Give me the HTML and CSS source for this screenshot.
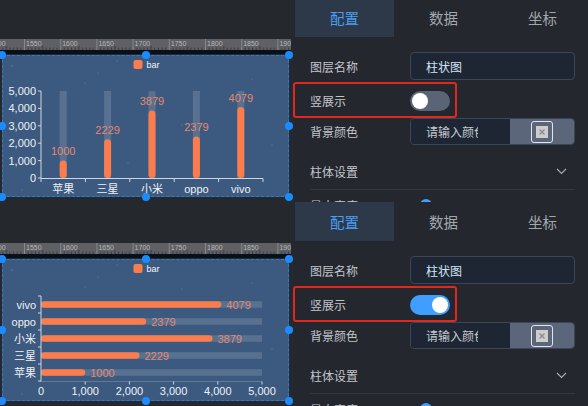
FILE: index.html
```html
<!DOCTYPE html>
<html lang="zh">
<head>
<meta charset="utf-8">
<title>柱状图配置</title>
<link rel="stylesheet" href="styles.css">
</head>
<body>

<div class="screen first">
  <div class="editor">
    <svg class="ruler" width="291" height="11" viewBox="0 0 291 11">
      <defs>
        <pattern id="tk1" x="24" y="0" width="36.2" height="11" patternUnits="userSpaceOnUse">
          <line x1="0.5" y1="0" x2="0.5" y2="11" class="major"/>
          <path d="M4.12 8.5V11M7.74 8.5V11M11.36 8.5V11M14.98 8.5V11M18.6 7V11M22.22 8.5V11M25.84 8.5V11M29.46 8.5V11M33.08 8.5V11" class="minor"/>
        </pattern>
      </defs>
      <rect width="291" height="11" class="rbg"/>
      <rect width="291" height="11" fill="url(#tk1)"/>
      <text x="-10" y="6.5">1500</text><text x="26" y="6.5">1550</text><text x="62.2" y="6.5">1600</text><text x="98.4" y="6.5">1650</text><text x="134.6" y="6.5">1700</text><text x="170.8" y="6.5">1750</text><text x="207" y="6.5">1800</text><text x="243.2" y="6.5">1850</text><text x="279.4" y="6.5">1900</text>
    </svg>
    <div class="ruler-bar"></div>
    <div class="chart">
      <svg class="plot" width="287" height="142" viewBox="0 0 287 142">
        <g class="stars">
          <circle cx="10" cy="11" r="0.7"/><circle cx="115" cy="6" r="0.6"/><circle cx="96" cy="18" r="0.5"/><circle cx="250" cy="24" r="0.6"/><circle cx="83" cy="28" r="0.5"/><circle cx="180" cy="70" r="0.6"/><circle cx="126" cy="108" r="0.6"/><circle cx="20" cy="135" r="0.5"/><circle cx="270" cy="90" r="0.6"/><circle cx="200" cy="130" r="0.5"/>
        </g>
        <rect class="lg" x="131.5" y="5" width="9" height="9" rx="2"/>
        <text class="lgt" x="144.5" y="12.5">bar</text>

        <g class="bgbar">
          <rect x="57.7" y="36" width="7" height="87"/>
          <rect x="102.1" y="36" width="7" height="87"/>
          <rect x="146.5" y="36" width="7" height="87"/>
          <rect x="190.9" y="36" width="7" height="87"/>
          <rect x="235.3" y="36" width="7" height="87"/>
        </g>
        <g class="bar">
          <rect x="57.7" y="105.6" width="7" height="17.4" rx="3.5"/>
          <rect x="102.1" y="84.2" width="7" height="38.8" rx="3.5"/>
          <rect x="146.5" y="55.5" width="7" height="67.5" rx="3.5"/>
          <rect x="190.9" y="81.6" width="7" height="41.4" rx="3.5"/>
          <rect x="235.3" y="52" width="7" height="71" rx="3.5"/>
        </g>
        <g class="axis">
          <line x1="39" y1="36" x2="39" y2="123.5"/>
          <line x1="36" y1="36" x2="39" y2="36"/>
          <line x1="36" y1="53.4" x2="39" y2="53.4"/>
          <line x1="36" y1="70.8" x2="39" y2="70.8"/>
          <line x1="36" y1="88.2" x2="39" y2="88.2"/>
          <line x1="36" y1="105.6" x2="39" y2="105.6"/>
          <line x1="36" y1="123" x2="39" y2="123"/>
          <line x1="39" y1="123.5" x2="261" y2="123.5"/>
          <line x1="39" y1="123.5" x2="39" y2="127"/>
          <line x1="83.4" y1="123.5" x2="83.4" y2="127"/>
          <line x1="127.8" y1="123.5" x2="127.8" y2="127"/>
          <line x1="172.2" y1="123.5" x2="172.2" y2="127"/>
          <line x1="216.6" y1="123.5" x2="216.6" y2="127"/>
          <line x1="261" y1="123.5" x2="261" y2="127"/>
        </g>
        <g class="lab end">
          <text x="34" y="40">5,000</text>
          <text x="34" y="57.4">4,000</text>
          <text x="34" y="74.8">3,000</text>
          <text x="34" y="92.2">2,000</text>
          <text x="34" y="109.6">1,000</text>
          <text x="34" y="127">0</text>
        </g>
        <g class="lab mid">
          <text x="61.2" y="137.5">苹果</text>
          <text x="105.6" y="137.5">三星</text>
          <text x="150" y="137.5">小米</text>
          <text x="194.4" y="137.5">oppo</text>
          <text x="238.8" y="137.5">vivo</text>
        </g>
        <g class="val mid">
          <text x="61.2" y="100.1">1000</text>
          <text x="105.6" y="78.7">2229</text>
          <text x="150" y="50">3879</text>
          <text x="194.4" y="76.1">2379</text>
          <text x="238.8" y="46.5">4079</text>
        </g>
      </svg>
      <span class="handle tl"></span><span class="handle tc"></span><span class="handle tr"></span>
      <span class="handle ml"></span><span class="handle mr"></span>
      <span class="handle bl"></span><span class="handle bc"></span><span class="handle br"></span>
    </div>
  </div>

  <div class="panel">
    <div class="tabs">
      <div class="tab active">配置</div>
      <div class="tab">数据</div>
      <div class="tab">坐标</div>
    </div>
    <div class="form">
      <div class="row r-name">
        <span class="label">图层名称</span>
        <div class="input">柱状图</div>
      </div>
      <div class="row r-toggle">
        <span class="label">竖展示</span>
        <span class="switch"><span class="knob"></span></span>
      </div>
      <div class="row r-color">
        <span class="label">背景颜色</span>
        <div class="color-input">
          <div class="color-text"><span class="ph">请输入颜色</span></div>
          <div class="color-btn">
            <span class="swatch">
              <svg width="12" height="12" viewBox="0 0 12 12"><rect width="12" height="12" fill="#cdcdcd"/><path d="M3.5 3.5L8.5 8.5M8.5 3.5L3.5 8.5" stroke="#8a8a8a" stroke-width="1.2"/></svg>
            </span>
          </div>
        </div>
      </div>
      <div class="row r-group">
        <span class="label">柱体设置</span>
        <svg class="chev" width="11" height="7" viewBox="0 0 11 7"><path d="M1 1L5.5 5.5L10 1" fill="none" stroke="#a6aab1" stroke-width="1.2"/></svg>
      </div>
      <div class="row r-width">
        <span class="label">最大宽度</span>
        <span class="slider"><span class="slider-knob"></span></span>
      </div>
    </div>
    <div class="highlight"></div>
  </div>
</div>

<div class="screen">
  <div class="editor">
    <svg class="ruler" width="291" height="11" viewBox="0 0 291 11">
      <defs>
        <pattern id="tk2" x="24" y="0" width="36.2" height="11" patternUnits="userSpaceOnUse">
          <line x1="0.5" y1="0" x2="0.5" y2="11" class="major"/>
          <path d="M4.12 8.5V11M7.74 8.5V11M11.36 8.5V11M14.98 8.5V11M18.6 7V11M22.22 8.5V11M25.84 8.5V11M29.46 8.5V11M33.08 8.5V11" class="minor"/>
        </pattern>
      </defs>
      <rect width="291" height="11" class="rbg"/>
      <rect width="291" height="11" fill="url(#tk2)"/>
      <text x="-10" y="6.5">1500</text><text x="26" y="6.5">1550</text><text x="62.2" y="6.5">1600</text><text x="98.4" y="6.5">1650</text><text x="134.6" y="6.5">1700</text><text x="170.8" y="6.5">1750</text><text x="207" y="6.5">1800</text><text x="243.2" y="6.5">1850</text><text x="279.4" y="6.5">1900</text>
    </svg>
    <div class="ruler-bar"></div>
    <div class="chart">
      <svg class="plot" width="287" height="142" viewBox="0 0 287 142">
        <g class="stars">
          <circle cx="10" cy="11" r="0.7"/><circle cx="115" cy="6" r="0.6"/><circle cx="96" cy="18" r="0.5"/><circle cx="250" cy="24" r="0.6"/><circle cx="83" cy="28" r="0.5"/><circle cx="180" cy="30" r="0.6"/><circle cx="126" cy="98" r="0.6"/><circle cx="20" cy="135" r="0.5"/><circle cx="270" cy="90" r="0.6"/><circle cx="200" cy="130" r="0.5"/>
        </g>
        <rect class="lg" x="131.5" y="5" width="9" height="9" rx="2"/>
        <text class="lgt" x="144.5" y="12.5">bar</text>

        <g class="bgbar">
          <rect x="39" y="42.25" width="221" height="6.5"/>
          <rect x="39" y="59.25" width="221" height="6.5"/>
          <rect x="39" y="76.25" width="221" height="6.5"/>
          <rect x="39" y="93.25" width="221" height="6.5"/>
          <rect x="39" y="110.25" width="221" height="6.5"/>
        </g>
        <g class="bar">
          <rect x="39" y="42.25" width="180.3" height="6.5" rx="3.25"/>
          <rect x="39" y="59.25" width="105.2" height="6.5" rx="3.25"/>
          <rect x="39" y="76.25" width="171.5" height="6.5" rx="3.25"/>
          <rect x="39" y="93.25" width="98.5" height="6.5" rx="3.25"/>
          <rect x="39" y="110.25" width="44.2" height="6.5" rx="3.25"/>
        </g>
        <g class="axis">
          <line x1="39" y1="37" x2="39" y2="122.5"/>
          <line x1="36" y1="37" x2="39" y2="37"/>
          <line x1="36" y1="54" x2="39" y2="54"/>
          <line x1="36" y1="71" x2="39" y2="71"/>
          <line x1="36" y1="88" x2="39" y2="88"/>
          <line x1="36" y1="105" x2="39" y2="105"/>
          <line x1="36" y1="122" x2="39" y2="122"/>
        </g>
        <g class="axis faint">
          <line x1="39" y1="122.5" x2="260" y2="122.5"/>
        </g>
        <g class="axis">
          <line x1="83.2" y1="122.5" x2="83.2" y2="125.5"/>
          <line x1="127.4" y1="122.5" x2="127.4" y2="125.5"/>
          <line x1="171.6" y1="122.5" x2="171.6" y2="125.5"/>
          <line x1="215.8" y1="122.5" x2="215.8" y2="125.5"/>
          <line x1="260" y1="122.5" x2="260" y2="125.5"/>
        </g>
        <g class="lab end">
          <text x="34" y="49.5">vivo</text>
          <text x="34" y="66.5">oppo</text>
          <text x="34" y="83.5">小米</text>
          <text x="34" y="100.5">三星</text>
          <text x="34" y="117.5">苹果</text>
        </g>
        <g class="lab mid">
          <text x="39" y="136">0</text>
          <text x="83.2" y="136">1,000</text>
          <text x="127.4" y="136">2,000</text>
          <text x="171.6" y="136">3,000</text>
          <text x="215.8" y="136">4,000</text>
          <text x="260" y="136">5,000</text>
        </g>
        <g class="val">
          <text x="224.3" y="49.5">4079</text>
          <text x="149.2" y="66.5">2379</text>
          <text x="215.5" y="83.5">3879</text>
          <text x="142.5" y="100.5">2229</text>
          <text x="88.2" y="117.5">1000</text>
        </g>
      </svg>
      <span class="handle tl"></span><span class="handle tc"></span><span class="handle tr"></span>
      <span class="handle ml"></span><span class="handle mr"></span>
      <span class="handle bl"></span><span class="handle bc"></span><span class="handle br"></span>
    </div>
  </div>

  <div class="panel">
    <div class="tabs">
      <div class="tab active">配置</div>
      <div class="tab">数据</div>
      <div class="tab">坐标</div>
    </div>
    <div class="form">
      <div class="row r-name">
        <span class="label">图层名称</span>
        <div class="input">柱状图</div>
      </div>
      <div class="row r-toggle">
        <span class="label">竖展示</span>
        <span class="switch on"><span class="knob"></span></span>
      </div>
      <div class="row r-color">
        <span class="label">背景颜色</span>
        <div class="color-input">
          <div class="color-text"><span class="ph">请输入颜色</span></div>
          <div class="color-btn">
            <span class="swatch">
              <svg width="12" height="12" viewBox="0 0 12 12"><rect width="12" height="12" fill="#cdcdcd"/><path d="M3.5 3.5L8.5 8.5M8.5 3.5L3.5 8.5" stroke="#8a8a8a" stroke-width="1.2"/></svg>
            </span>
          </div>
        </div>
      </div>
      <div class="row r-group">
        <span class="label">柱体设置</span>
        <svg class="chev" width="11" height="7" viewBox="0 0 11 7"><path d="M1 1L5.5 5.5L10 1" fill="none" stroke="#a6aab1" stroke-width="1.2"/></svg>
      </div>
      <div class="row r-width">
        <span class="label">最大宽度</span>
        <span class="slider"><span class="slider-knob"></span></span>
      </div>
    </div>
    <div class="highlight"></div>
  </div>
</div>

</body>
</html>
```

FILE: styles.css
```css
html, body {
  margin: 0;
  padding: 0;
}
body {
  width: 588px;
  height: 406px;
  overflow: hidden;
  background: #24272d;
  font-family: "Noto Sans CJK SC", "Liberation Sans", sans-serif;
}

.screen {
  display: flex;
  height: 204px;
  overflow: hidden;
}
.screen.first {
  margin-top: -2px;
}

/* editor / canvas side */
.editor {
  width: 294px;
  flex: none;
  padding-top: 41px;
  box-sizing: border-box;
  background: #25282d;
}
.ruler {
  display: block;
}
.ruler .rbg { fill: #5e6064; }
.ruler .major { stroke: #85878b; stroke-width: 1; }
.ruler .minor { stroke: #2c2d30; stroke-width: 0.8; }
.ruler text {
  font-family: "Liberation Sans", sans-serif;
  font-size: 7px;
  fill: #b4b6b9;
}
.ruler-bar {
  width: 291px;
  height: 4px;
  background: #0b0f17;
}

.chart {
  position: relative;
  margin: 1px 0 0 2px;
  width: 287px;
  height: 142px;
  background: #3c5a80;
  outline: 1px dashed rgba(40, 140, 255, 0.65);
  outline-offset: -1px;
}
.plot {
  display: block;
}
.plot text {
  font-family: "Liberation Sans", "Noto Sans CJK SC", sans-serif;
  font-size: 11px;
}
.plot .stars circle { fill: rgba(200, 215, 240, 0.35); }
.plot .lg { fill: #fb7c4c; }
.plot .lgt { fill: #f2f4f8; font-size: 9px; }
.plot .bgbar rect { fill: rgba(175, 182, 195, 0.25); }
.plot .bar rect { fill: #fb7c4c; }
.plot .axis line { stroke: #cfd6e0; stroke-width: 1; }
.plot .axis.faint line { stroke: rgba(207, 214, 224, 0.25); }
.plot .lab text { fill: #eef1f5; }
.plot .val text { fill: #e5886d; }
.plot .end text { text-anchor: end; }
.plot .mid text { text-anchor: middle; }

.handle {
  position: absolute;
  width: 8px;
  height: 8px;
  border-radius: 50%;
  background: #1a8cff;
  transform: translate(-50%, -50%);
}
.handle.tl { left: 0; top: 0; }
.handle.tc { left: 50%; top: 0; }
.handle.tr { left: 100%; top: 0; }
.handle.ml { left: 0; top: 50%; }
.handle.mr { left: 100%; top: 50%; }
.handle.bl { left: 0; top: 100%; }
.handle.bc { left: 50%; top: 100%; }
.handle.br { left: 100%; top: 100%; }

/* settings panel */
.panel {
  position: relative;
  width: 294px;
  flex: none;
  background: #24272d;
}
.tabs {
  display: flex;
  height: 39px;
  padding-left: 1px;
}
.tab {
  width: 99px;
  flex: none;
  display: flex;
  align-items: center;
  justify-content: center;
  font-size: 14.5px;
  color: #a3a7ae;
}
.tab.active {
  background: #2d3848;
  color: #4a9ef5;
}

.form {
  padding: 15px 13px 0 16px;
}
.row {
  display: flex;
  align-items: center;
  box-sizing: border-box;
}
.label {
  width: 100px;
  flex: none;
  font-size: 12px;
  line-height: 13px;
  color: #c1c5cc;
}
.r-name { height: 28px; }
.r-toggle { height: 38px; padding-top: 3px; }
.r-color { height: 27px; }
.r-group {
  height: 45px;
  align-items: flex-start;
  padding-top: 20px;
  border-bottom: 1px solid #33373e;
  justify-content: space-between;
}
.r-width {
  align-items: flex-start;
  padding-top: 9px;
}

.input {
  flex: 1;
  height: 28px;
  box-sizing: border-box;
  border: 1px solid #3a4758;
  border-radius: 4px;
  background: #1d2632;
  padding: 0 15px;
  display: flex;
  align-items: center;
  font-size: 12px;
  color: #d3e3f8;
}

.switch {
  position: relative;
  width: 40px;
  height: 20px;
  border-radius: 10px;
  background: #5b6376;
  flex: none;
}
.switch .knob {
  position: absolute;
  top: 2px;
  left: 2px;
  width: 16px;
  height: 16px;
  border-radius: 50%;
  background: #ffffff;
}
.switch.on {
  background: #409eff;
}
.switch.on .knob {
  left: 22px;
}

.color-input {
  flex: 1;
  height: 27px;
  display: flex;
  box-sizing: border-box;
  border: 1px solid #3a4758;
  border-radius: 4px;
  overflow: hidden;
}
.color-text {
  flex: 1;
  background: #1d2632;
  padding-left: 15px;
  display: flex;
  align-items: center;
}
.ph {
  width: 52px;
  overflow: hidden;
  white-space: nowrap;
  font-size: 12px;
  color: #c7cbd2;
}
.color-btn {
  width: 64px;
  flex: none;
  background: #5c667a;
  display: flex;
  align-items: center;
  justify-content: center;
}
.swatch {
  width: 22px;
  height: 22px;
  box-sizing: border-box;
  border: 1.5px solid #e4e6ea;
  border-radius: 3px;
  display: flex;
  align-items: center;
  justify-content: center;
}
.swatch svg { display: block; }

.chev {
  margin: 3px 8px 0 0;
  display: block;
}

.slider {
  position: relative;
  flex: 1;
  height: 14px;
}
.slider-knob {
  position: absolute;
  left: 10px;
  top: 0;
  width: 12px;
  height: 12px;
  border-radius: 50%;
  background: #409eff;
}

.highlight {
  position: absolute;
  left: -1px;
  top: 84px;
  width: 164px;
  height: 36px;
  box-sizing: border-box;
  border: 2px solid #e0281f;
  border-radius: 3px;
}
```
